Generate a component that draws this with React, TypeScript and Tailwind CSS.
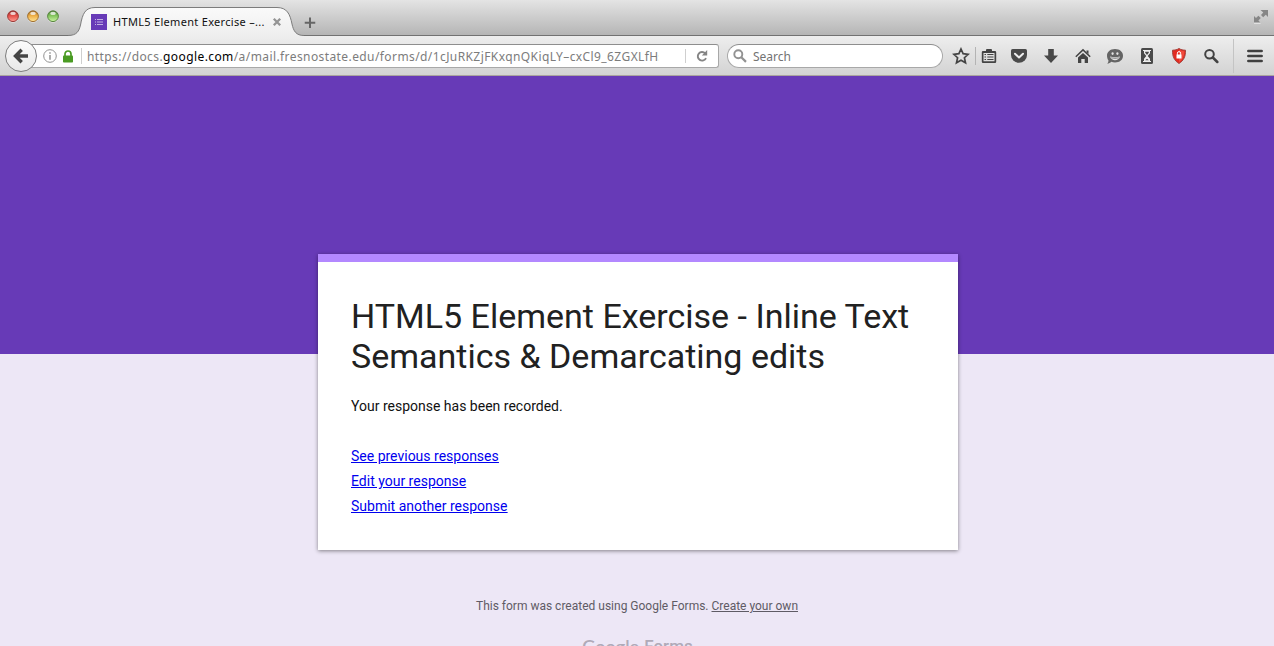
import React from "react";

const lights = [
  { id: "close", rim: "#8f2c2a", mid: "#e4504a", glow: "#ff9d94" },
  { id: "minimize", rim: "#966423", mid: "#eeae45", glow: "#ffe598" },
  { id: "zoom", rim: "#4b7a33", mid: "#83c55d", glow: "#cdf5a5" },
];

function TrafficLight({ id, rim, mid, glow }: { id: string; rim: string; mid: string; glow: string }) {
  return (
    <svg width="12" height="13" viewBox="0 0 12 13" className="shrink-0">
      <defs>
        <linearGradient id={id} x1="0" y1="0" x2="0" y2="1">
          <stop offset="0" stopColor={rim} />
          <stop offset="0.45" stopColor={mid} />
          <stop offset="1" stopColor={glow} />
        </linearGradient>
      </defs>
      <circle cx="6" cy="7" r="5.8" fill="#fff" opacity="0.5" />
      <circle cx="6" cy="6.2" r="5.4" fill={`url(#${id})`} stroke={rim} strokeWidth="0.9" />
      <ellipse cx="6" cy="3.4" rx="2.8" ry="1.7" fill="#fff" opacity="0.75" />
    </svg>
  );
}

function TabStrip() {
  return (
    <div className="flex h-9 w-full shrink-0 bg-linear-to-b from-[#e4e4e4] to-[#b4b4b4] shadow-[inset_0_-1px_0_#727272]">
      <div className="flex w-[68px] shrink-0 gap-2 pt-[10px] pl-[7px]">
        {lights.map((l) => (
          <TrafficLight key={l.id} {...l} />
        ))}
      </div>
      <div className="relative h-9 w-[236px] shrink-0">
        <svg className="absolute inset-0" width="236" height="36" viewBox="0 0 236 36">
          <defs>
            <linearGradient id="tab" x1="0" y1="0" x2="0" y2="1">
              <stop offset="0" stopColor="#fafafa" />
              <stop offset="1" stopColor="#eeeeee" />
            </linearGradient>
          </defs>
          <path
            d="M0 35.5 C9 35.5 11 31 12.5 25 C14.500 14 17 7.500 27 7.500 H209 C219 7.500 222 14 224 24 C225.500 31 228 35.500 236 35.500 V36 H0 Z"
            fill="url(#tab)"
          />
          <path
            d="M0 35.5 C9 35.5 11 31 12.5 25 C14.500 14 17 7.500 27 7.500 H209 C219 7.500 222 14 224 24 C225.500 31 228 35.500 236 35.500"
            fill="none"
            stroke="#7c7c7c"
          />
        </svg>
        <div className="relative flex items-start pt-[14px] pl-[23px]">
          <svg width="16" height="16" viewBox="0 0 16 16" className="shrink-0">
            <rect width="16" height="16" fill="#673ab7" />
            <path d="M4 5.500h1M4 8h1M4 10.500h1M6 5.500h6M6 8h6M6 10.500h6" stroke="#c3b0e2" strokeWidth="1" />
          </svg>
          <span className="ml-[6px] w-[153px] overflow-hidden font-['Noto_Sans',sans-serif] text-[11px] leading-4 tracking-[0.31px] whitespace-nowrap text-[#111]">
            HTML5 Element Exercise –...
          </span>
          <svg width="10" height="10" viewBox="0 0 10 10" className="mt-[3px] ml-[6px] shrink-0">
            <path d="M1.800 1.800 8.200 8.200M8.200 1.800 1.800 8.200" stroke="#949494" strokeWidth="2.300" />
          </svg>
        </div>
      </div>
      <svg width="13" height="13" viewBox="0 0 13 13" className="mt-[17px] shrink-0">
        <path d="M6 0.500v10.500M0.750 5.750h10.500" stroke="#666" strokeWidth="2" />
      </svg>
      <svg width="16" height="16" viewBox="0 0 16 16" className="mt-2 mr-[5px] ml-auto shrink-0">
        <path d="M7.500 2H15v7l-2.200-2.200-2.600 2.400L8 7l2.300-2.500z" fill="#868686" />
        <path d="M1 8l2 2 2.400-2.300L7.800 10l-2.400 2.600 2.100 2.100H1z" fill="#868686" />
        <path d="M1 15.200h6.500" stroke="#eee" />
      </svg>
    </div>
  );
}

function Star() {
  return (
    <svg width="18" height="18" viewBox="0 0 18 18">
      <path d="M9 2l2.100 4.700 5.100.6-3.800 3.400 1.100 5.100L9 13.200l-4.500 2.600 1.100-5.100L1.800 7.300l5.100-.6z" fill="none" stroke="#444" strokeWidth="1.700" />
    </svg>
  );
}

function Clipboard() {
  return (
    <svg width="16" height="16" viewBox="0 0 16 16">
      <path fillRule="evenodd" d="M5 3V2q0-1 1-1h4q1 0 1 1v1h3q1.200 0 1.200 1.200v9.600Q15.200 15 14 15H2Q.8 15 .8 13.800V4.200Q.8 3 2 3zM2.500 5v8.300h11V5z" fill="#444" />
      <path d="M3.500 6.500h1.500M6.300 6.500h6.200M3.500 9h1.500M6.300 9h6.200M3.500 11.500h1.500M6.300 11.500h6.200" stroke="#444" strokeWidth="1.200" />
    </svg>
  );
}

function Pocket() {
  return (
    <svg width="18" height="16" viewBox="0 0 18 16">
      <path d="M2.600 1h12.800Q17 1 17 2.500V7A8 7.700 0 0 1 1 7V2.500Q1 1 2.600 1z" fill="#4a4a4a" />
      <path d="M5 5.700l4 3.800 4-3.800" fill="none" stroke="#eee" strokeWidth="2" strokeLinecap="round" strokeLinejoin="round" />
    </svg>
  );
}

function Download() {
  return (
    <svg width="16" height="16" viewBox="0 0 16 16">
      <path d="M5.200 1h5.600v6.600H15L8 15 1 7.600h4.200z" fill="#484848" />
    </svg>
  );
}

function Home() {
  return (
    <svg width="16" height="16" viewBox="0 0 16 16">
      <path d="M.8 8.700L8 1.900l7.200 6.800" fill="none" stroke="#444" strokeWidth="1.500" />
      <path d="M11.500 2.500h2v3.500l-2-1.700z" fill="#444" />
      <path d="M3 9.600l5-4.700 5 4.700V15H9.700v-4H6.300v4H3z" fill="#444" />
    </svg>
  );
}

function Smiley() {
  return (
    <svg width="18" height="17" viewBox="0 0 18 17">
      <path d="M9 1c4.800 0 8 2.800 8 6.800s-3.200 6.700-8 6.700c-1.300 0-2.600-.2-3.700-.7-1 1-2.500 1.700-4 1.900.8-.9 1.200-2 1.200-3.200C1.500 11.300 1 9.700 1 7.800 1 3.800 4.200 1 9 1z" fill="#646464" />
      <ellipse cx="6.600" cy="5.600" rx="1.100" ry="1.300" fill="#e4e4e4" />
      <ellipse cx="11.400" cy="5.600" rx="1.100" ry="1.300" fill="#e4e4e4" />
      <path d="M4 8.500Q9 10 14 8.500 12.600 12.300 9 12.300T4 8.500z" fill="#e4e4e4" />
      <path d="M5.200 9.800Q9 11 12.800 9.800" fill="none" stroke="#646464" strokeWidth="0.700" />
    </svg>
  );
}

function Hourglass() {
  return (
    <svg width="14" height="18" viewBox="0 0 14 18">
      <rect x="1" y="1" width="12" height="16" rx="1.500" fill="#4a4a4a" />
      <path d="M3 3.500h8M3 14.500h8" stroke="#eee" strokeWidth="1.200" />
      <path d="M4 4v2.300L6.300 9 4 11.700V14h6v-2.300L7.700 9 10 6.300V4z" fill="#eee" />
      <path d="M5.200 4.700h3.600v1L7 7.900 5.200 5.700zM5.200 13.300L7 11.800l1.800 1.500z" fill="#4a4a4a" />
    </svg>
  );
}

function Shield() {
  return (
    <svg width="16" height="18" viewBox="0 0 16 18">
      <path d="M8 1.500c2 1.300 4.200 1.700 6.500 1.700C14.700 9 13 13.500 8 16.500 3 13.500 1.300 9 1.500 3.200 3.800 3.200 6 2.800 8 1.500z" fill="#e32a20" stroke="#a4453f" />
      <path d="M8 2.800v12.400C11.700 12.700 13.300 9 13.400 4.200 11.400 4.100 9.600 3.700 8 2.800z" fill="#f04a3c" />
      <rect x="5.500" y="7.500" width="5" height="4" fill="#fff" />
      <path d="M6.400 7.800V6.200a1.600 1.600 0 0 1 3.200 0v1.600" fill="none" stroke="#fff" />
    </svg>
  );
}

function Magnifier() {
  return (
    <svg width="16" height="16" viewBox="0 0 16 16">
      <circle cx="6.500" cy="6.200" r="4.300" fill="none" stroke="#424242" strokeWidth="2" />
      <path d="M9.800 9.500l4.500 4.500" stroke="#424242" strokeWidth="2.500" strokeLinecap="round" />
    </svg>
  );
}

const tools = [Pocket, Download, Home, Smiley, Hourglass, Shield, Magnifier];

function Toolbar() {
  return (
    <div className="flex h-10 w-full shrink-0 items-center bg-linear-to-b from-[#eeeeee] to-[#d2d2d2] shadow-[inset_0_-1px_0_#aaa49f]">
      <div className="relative z-10 ml-[5px] flex size-8 shrink-0 items-center justify-center rounded-full border border-[#7d7d7d] bg-linear-to-b from-[#fcfcfc] to-[#e8e8e8]">
        <svg width="16" height="16" viewBox="0 0 16 16">
          <path d="M8.700 1.800L2.500 8l6.200 6.200M3 8h12" fill="none" stroke="#454545" strokeWidth="3.400" />
        </svg>
      </div>
      <div className="-ml-3 flex h-6 w-[694px] shrink-0 items-center rounded-r-[3px] border border-[#a8a8a8] border-t-[#8e8e8e] bg-white pl-[17px]">
        <svg width="14" height="14" viewBox="0 0 14 14" className="shrink-0">
          <circle cx="7" cy="7" r="6.300" fill="none" stroke="#929292" strokeWidth="1" />
          <path d="M7 3.200v1.500M7 6v4.800" stroke="#8a8a8a" strokeWidth="1.400" />
        </svg>
        <svg width="10" height="13" viewBox="0 0 10 13" className="ml-[6px] shrink-0">
          <path d="M2 6V4a3 3 0 0 1 6 0v2" fill="none" stroke="#4a9b23" strokeWidth="1.700" />
          <rect y="5.500" width="10" height="7" rx="0.800" fill="#4a9b23" />
        </svg>
        <span className="ml-[8px] h-4 w-px shrink-0 bg-[#cfcfcf]" />
        <div className="mt-[2px] ml-[5px] w-[572px] shrink-0 overflow-hidden font-['Noto_Sans',sans-serif] text-[12px] leading-[18px] tracking-[0.41px] whitespace-nowrap text-[#7c7c7c]">
          https://docs.<span className="text-black">google.com</span>/a/mail.fresnostate.edu/forms/d/1cJuRKZjFKxqnQKiqLY–cxCl9_6ZGXLfHs
        </div>
        <span className="ml-[26px] h-[14px] w-px shrink-0 bg-[#cfcfcf]" />
        <svg width="14" height="14" viewBox="0 0 14 14" className="ml-[9px] shrink-0">
          <path d="M10.200 4.300A4.300 4.300 0 1 0 11 9.100" fill="none" stroke="#858585" strokeWidth="1.900" />
          <path d="M12.200 1v5.500H6.800z" fill="#858585" />
        </svg>
      </div>
      <div className="ml-2 flex h-6 w-[216px] shrink-0 items-center rounded-full border border-[#a8a8a8] border-t-[#8e8e8e] bg-white pl-[5px]">
        <svg width="14" height="14" viewBox="0 0 14 14" className="shrink-0">
          <circle cx="5.300" cy="5.200" r="4" fill="none" stroke="#929292" strokeWidth="1.900" />
          <path d="M8.300 8.200l4.700 4.700" stroke="#929292" strokeWidth="2.200" />
        </svg>
        <span className="mt-[2px] ml-[6px] font-['Noto_Sans',sans-serif] text-[12px] leading-[18px] text-[#737373]">Search</span>
      </div>
      <div className="ml-[9px] flex w-[18px] shrink-0"><Star /></div>
      <span className="ml-[5px] h-[18px] w-px shrink-0 bg-[#b4b4b4]" />
      <div className="ml-[5px] flex w-4 shrink-0"><Clipboard /></div>
      <div className="ml-[6px] flex shrink-0">
        {tools.map((Icon, i) => (
          <div key={i} className="flex h-5 w-8 items-center justify-center"><Icon /></div>
        ))}
      </div>
      <span className="ml-[6px] h-[34px] w-px shrink-0 bg-[#c4c4c4]" />
      <svg width="16" height="14" viewBox="0 0 16 14" className="ml-[13px] shrink-0">
        <path d="M1.400 2h13.200M1.400 7h13.200M1.400 12h13.200" stroke="#404040" strokeWidth="2.700" strokeLinecap="round" />
      </svg>
    </div>
  );
}

export default function App() {
  return (
    <div className="flex h-[646px] w-[1274px] flex-col overflow-hidden font-[Roboto,sans-serif]">
      <TabStrip />
      <Toolbar />
      <main className="flex min-h-0 flex-1 flex-col items-center bg-[#ede7f6] bg-[linear-gradient(#673ab7_278px,#ede7f6_278px)] pt-[178px] pl-[2px]">
        <section className="h-[296px] w-[640px] shrink-0 border-t-8 border-[#b388ff] bg-white px-[33px] pt-[34px] shadow-[0_1px_4px_rgba(0,0,0,0.45)]">
          <h1 className="text-[34px] leading-10 text-[#212121]">
            HTML5 Element Exercise - Inline Text<br />Semantics &amp; Demarcating edits
          </h1>
          <p className="mt-5 text-[14px] leading-5 text-[#111]">Your response has been recorded.</p>
          <nav className="mt-[28px] flex flex-col items-start text-[14px] leading-[25px] text-[#0000ee] underline">
            <a href="#previous">See previous responses</a>
            <a href="#edit">Edit your response</a>
            <a href="#another">Submit another response</a>
          </nav>
        </section>
        <footer className="flex flex-col items-center pt-12 pr-[2px] text-[12px] leading-4 text-[#5f5b65]">
          <p>
            This form was created using Google Forms. <a href="#create" className="underline">Create your own</a>
          </p>
          <div className="mt-[20px] flex gap-1 pl-px text-[17px] leading-6 whitespace-nowrap text-[#b0aab8]">
            <span className="w-[58px] font-[Lato,sans-serif] text-[18px] font-semibold">Google</span>
            <span className="font-medium">Forms</span>
          </div>
        </footer>
      </main>
    </div>
  );
}
